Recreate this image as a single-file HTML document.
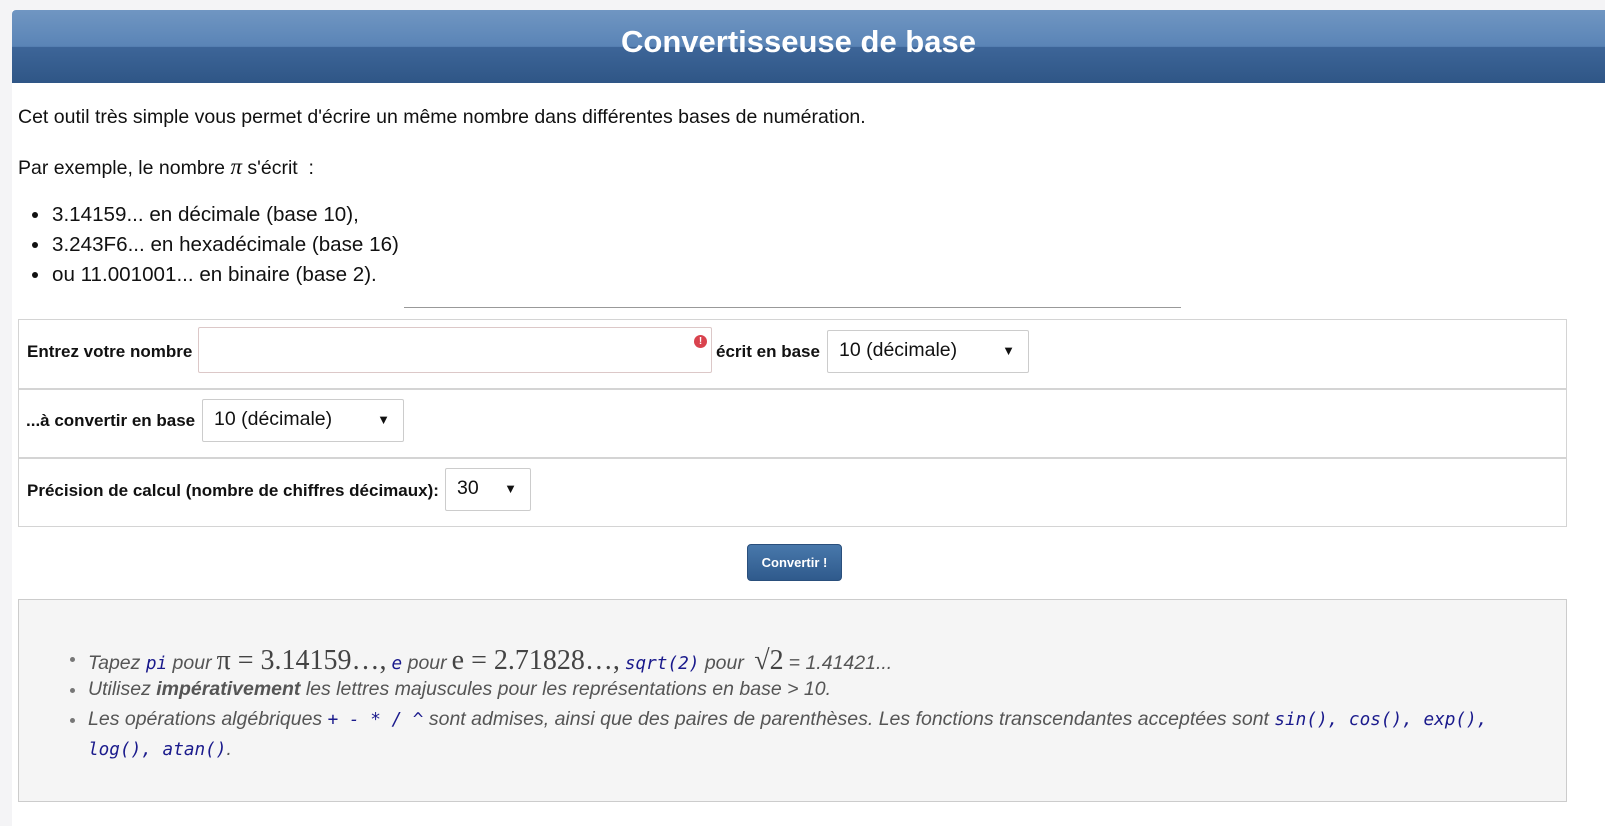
<!DOCTYPE html>
<html><head><meta charset="utf-8"><style>
*{box-sizing:border-box;margin:0;padding:0}
body{width:1605px;height:826px;background:#f4f4f6;font-family:"Liberation Sans",Arial,sans-serif;color:#111;position:relative;overflow:hidden}
#page{position:absolute;left:12px;top:10px;width:1593px;height:816px;background:#fff}
#hdr{position:absolute;left:12px;top:10px;width:1593px;height:73px;border-radius:4px 0 0 0;background:linear-gradient(#7096c2 0%,#5a84b6 50%,#3d6598 51%,#2f5686 100%)}
#hdr h1{position:absolute;left:0;width:1573px;top:14px;text-align:center;color:#fff;font-size:31px;font-weight:bold}
.a{position:absolute;white-space:nowrap}
.t{font-size:19.5px}
.l{font-size:20.6px}
.b{font-weight:bold;font-size:17px}
.box{position:absolute;left:18px;width:1549px;border:1px solid #d4d4d4}
.sel{position:absolute;background:#fff;border:1px solid #ccc;border-radius:2px;font-size:19.5px;padding:8px 0 0 11px}
.sel i{position:absolute;right:13px;top:12px;font-style:normal;font-size:13px}
.n{font-style:italic;color:#555;font-size:19.5px}
code{font-family:"DejaVu Sans Mono",monospace;color:#1a1a8c;font-style:italic;font-size:17.7px}
.m{font-family:"Liberation Serif",serif;font-style:normal;font-size:28px;color:#444;padding:0 5px}
.dot{position:absolute;width:6px;height:6px;border-radius:50%;background:#111}
.dg{background:#777;width:5px;height:5px}
</style></head><body>
<div id="page"></div>
<div id="hdr"><h1>Convertisseuse de base</h1></div>
<div class="a t" style="left:18px;top:106px">Cet outil très simple vous permet d'écrire un même nombre dans différentes bases de numération.</div>
<div class="a t" style="left:18px;top:154px">Par exemple, le nombre <span style="font-family:'Liberation Serif',serif;font-style:italic;font-size:23px">π</span> s'écrit &nbsp;:</div>
<div class="dot" style="left:32px;top:212px"></div><div class="a l" style="left:52px;top:203px">3.14159... en décimale (base 10),</div>
<div class="dot" style="left:32px;top:242px"></div><div class="a l" style="left:52px;top:233px">3.243F6... en hexadécimale (base 16)</div>
<div class="dot" style="left:32px;top:272px"></div><div class="a l" style="left:52px;top:263px">ou 11.001001... en binaire (base 2).</div>
<div class="a" style="left:404px;top:307px;width:777px;height:1px;background:#999"></div>
<div class="box" style="top:319px;height:71px;border-bottom-width:2px"></div>
<div class="box" style="top:389px;height:70px;border-top:none;border-bottom-width:2px"></div>
<div class="box" style="top:458px;height:69px;border-top:none"></div>
<div class="a b" style="left:27px;top:342px">Entrez votre nombre</div>
<div class="a" style="left:198px;top:327px;width:514px;height:46px;border:1px solid #dcc8c8;border-radius:2px;background:#fff"></div>
<div class="a" style="left:694px;top:335px;width:13px;height:13px;border-radius:50%;background:#d9434e;color:#fff;font-size:10px;font-weight:bold;text-align:center;line-height:13px">!</div>
<div class="a b" style="left:716px;top:342px">écrit en base</div>
<div class="sel" style="left:827px;top:330px;width:202px;height:43px">10 (décimale)<i>▼</i></div>
<div class="a b" style="left:26px;top:411px">...à convertir en base</div>
<div class="sel" style="left:202px;top:399px;width:202px;height:43px">10 (décimale)<i>▼</i></div>
<div class="a b" style="left:27px;top:481px">Précision de calcul (nombre de chiffres décimaux):</div>
<div class="sel" style="left:445px;top:468px;width:86px;height:43px">30<i>▼</i></div>
<div class="a" style="left:747px;top:544px;width:95px;height:37px;border-radius:4px;background:linear-gradient(#4878ab,#2f5a8c);border:1px solid #2a4f7c;color:#fff;font-weight:bold;font-size:13px;text-align:center;line-height:35px">Convertir !</div>
<div class="box" style="top:599px;height:203px;background:#f5f5f5;border-color:#ccc"></div>
<div class="dot dg" style="left:70px;top:657px"></div>
<div class="a n" style="left:88px;top:645px">Tapez <code>pi</code> pour<span class="m">π = 3.14159…,</span><code>e</code> pour<span class="m">e = 2.71828…,</span><code>sqrt(2)</code> pour <span class="m">√2</span>= 1.41421...</div>
<div class="dot dg" style="left:70px;top:688px"></div>
<div class="a n" style="left:88px;top:678px">Utilisez <b>impérativement</b> les lettres majuscules pour les représentations en base &gt; 10.</div>
<div class="dot dg" style="left:70px;top:718px"></div>
<div class="a n" style="left:88px;top:708px">Les opérations algébriques <code>+ - * / ^</code> sont admises, ainsi que des paires de parenthèses. Les fonctions transcendantes acceptées sont <code>sin(), cos(), exp(),</code></div>
<div class="a n" style="left:88px;top:738px"><code>log(), atan()</code>.</div>
</body></html>
